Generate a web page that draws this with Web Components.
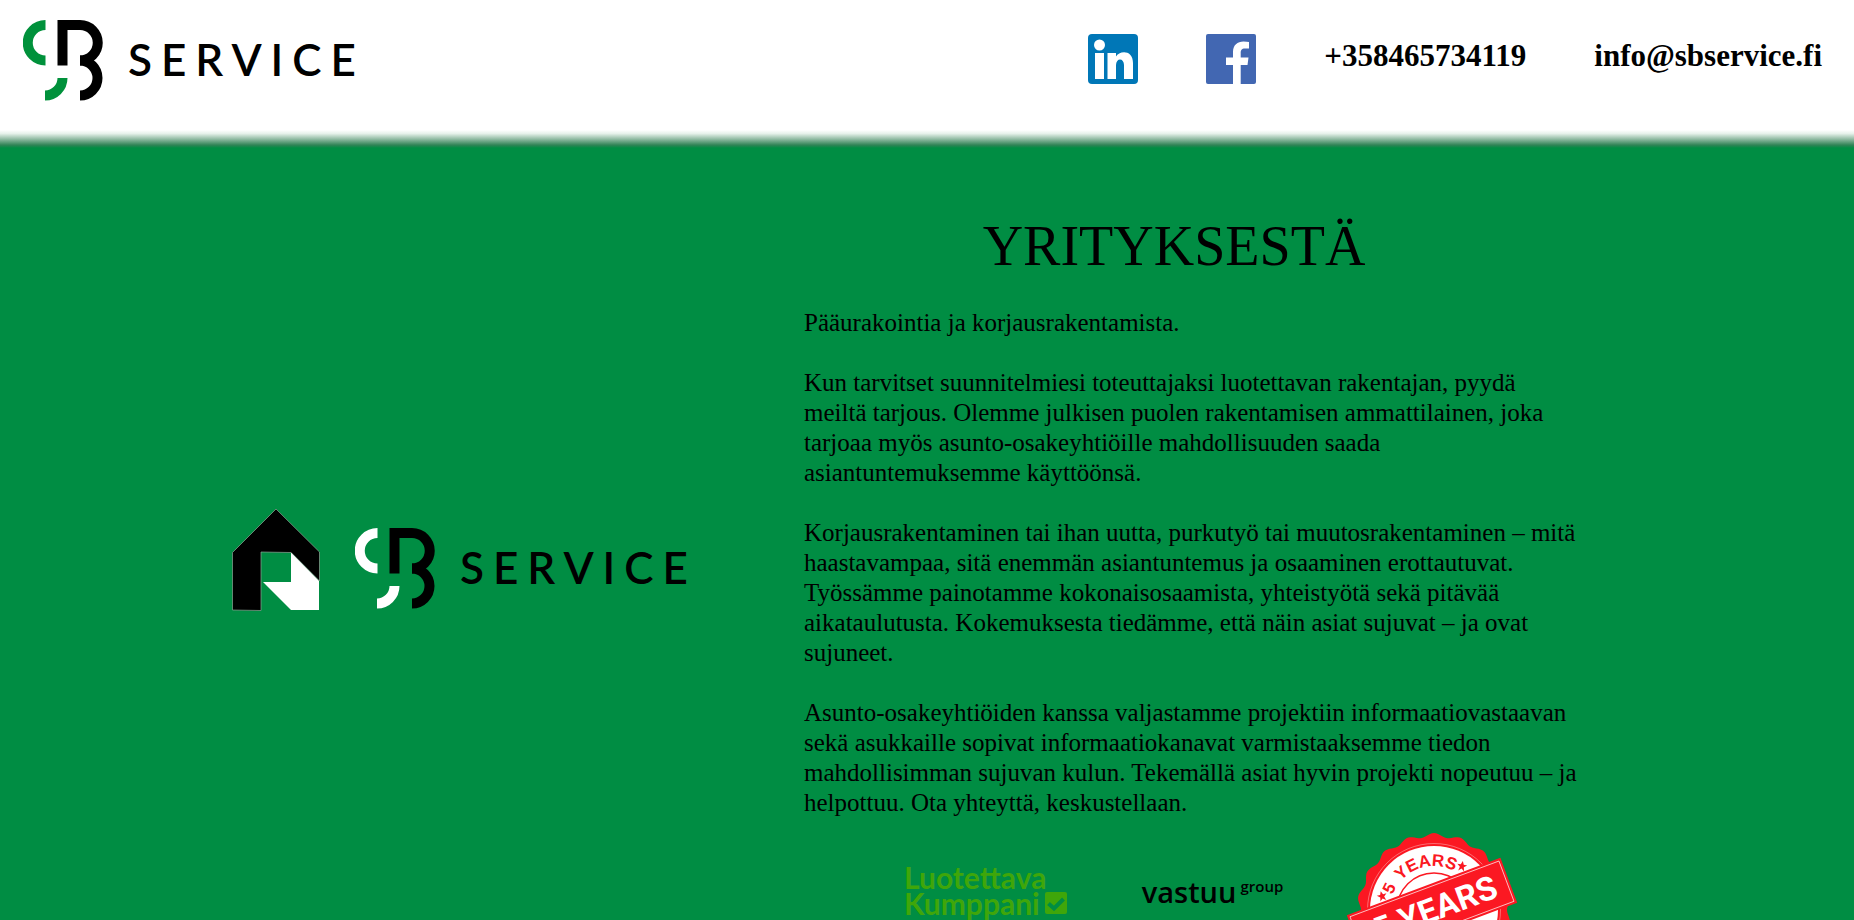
<!DOCTYPE html>
<html lang="fi">
<head>
<meta charset="utf-8">
<title>SB Service</title>
<style>
html { scrollbar-width: none; }
body { margin: 0; background: #008d43; color: #000; font-family: "Liberation Serif", "Times New Roman", serif; }
</style>
</head>
<body>
<sb-page></sb-page>
<script>
const define = (name, html) => {
  const t = document.createElement('template');
  t.innerHTML = html;
  customElements.define(name, class extends HTMLElement {
    constructor() {
      super();
      this.attachShadow({ mode: 'open' }).append(t.content.cloneNode(true));
    }
  });
};

define('sb-logo', `
<style>
  :host { display: flex; align-items: flex-start; gap: 25px; color: #000; }
  svg { display: block; flex: none; }
  .word { font: 600 44px/52px Lato, sans-serif; letter-spacing: 9px; margin-top: 13px; }
</style>
<svg width="80" height="81" viewBox="0 0 80 81" fill="none" stroke-width="10" role="img" aria-label="SB">
  <g style="stroke: var(--accent, #00913b)">
    <path d="M22.500 5H22.500A17.500 17.500 0 0 0 22.500 40.500"/>
    <path d="M22 75.500A17.500 17.500 0 0 0 39.500 58"/>
  </g>
  <g stroke="#000">
    <path d="M39.500 45.500V5H57A17.500 17.500 0 0 1 57 40.500"/>
    <path d="M57 40.500A17.500 17.500 0 0 1 57 75.500"/>
  </g>
</svg>
<span class="word">SERVICE</span>`);

define('sb-house', `
<style>:host { display: block; } svg { display: block; }</style>
<svg width="88" height="103" viewBox="0 0 88 103" role="img" aria-label="Talo">
  <path d="M44 1L87.500 44V73L59 44.500L29 44V102.500L.5 102V44.500Z" stroke="#8fa396" stroke-width=".7"/>
  <path d="M59 44.500L87 73V102H59L31 74H59Z" fill="#fff"/>
</svg>`);

define('sb-header', `
<style>
  :host { display: block; }
  header { display: flex; justify-content: space-between; align-items: flex-start; min-height: 148px; box-sizing: border-box; padding: 20px 32px 0 23px;
    background: linear-gradient(#fff, #fff) top / 100% calc(100% - 18px) no-repeat,
      linear-gradient(#fff, #e6f1ea 20%, #8cb89f 52%, #2f8355 84%, #008d43) bottom / 100% 18px no-repeat; }
  nav { display: flex; align-items: center; gap: 68px; padding-top: 14px; }
  a { color: inherit; text-decoration: none; font-weight: 700; font-size: 31px; line-height: 36px; }
  a svg { display: block; }
  .text { align-self: flex-start; margin-top: 4px; }
</style>
<header>
  <sb-logo></sb-logo>
  <nav>
    <a href="#linkedin" aria-label="LinkedIn"><svg width="50" height="50" viewBox="0 0 50 50">
      <rect width="50" height="50" rx="4" fill="#0077b7"/>
      <g fill="#fff"><circle cx="11.500" cy="11" r="5.500"/><path d="M7 19h9v26H7zM19.500 19H28v3.500C31 16.500 45 15 45 29V45H36V31C36 23.500 28 23.500 28 31V45H19.500z"/></g>
    </svg></a>
    <a href="#facebook" aria-label="Facebook"><svg width="50" height="50" viewBox="0 0 50 50">
      <rect width="50" height="50" rx="2" fill="#4267b2"/>
      <path fill="#fff" d="M27 50V31H20V23.500H27V18C27 11 31.500 7.500 37.500 7.500Q41 7.500 43 8V14.500H39C35.500 14.500 34.700 16.500 34.700 19V23.500H42.500L41.500 31H34.700V50z"/>
    </svg></a>
    <a class="text" href="tel:+358465734119">+358465734119</a>
    <a class="text" href="mailto:info@sbservice.fi">info@sbservice.fi</a>
  </nav>
</header>`);

define('sb-brand', `
<style>
  :host { display: flex; align-items: flex-end; gap: 35px; --accent: #fff; }
  sb-logo { height: 83px; }
</style>
<sb-house></sb-house><sb-logo></sb-logo>`);

define('sb-partner', `
<style>
  :host { display: block; color: #3fa60a; font: 700 30px/26px Lato, sans-serif; }
  div { display: flex; align-items: center; gap: 5px; }
  svg { display: block; }
</style>
<div>Luotettava</div>
<div>Kumppani<svg width="22" height="22" viewBox="0 0 22 22" role="img" aria-label="Tarkistettu"><rect width="22" height="22" rx="2" fill="currentColor"/><path d="M3.500 11.500L9 16.500L18.500 7" fill="none" stroke="#008d43" stroke-width="4"/></svg></div>`);

define('sb-vastuu', `
<style>
  :host { display: flex; align-items: flex-start; gap: 4px; font: 600 29px/36px "Open Sans", sans-serif; }
  small { font-size: 15px; line-height: 24px; }
</style>
<span>vastuu</span><small>group</small>`);

define('sb-stamp', `
<style>
  :host { display: block; }
  svg { display: block; overflow: visible; }
  text { font-family: "Liberation Sans", sans-serif; font-weight: 700; }
  .banner { font-family: Roboto, sans-serif; }
</style>
<svg width="172" height="172" viewBox="0 0 172 172">
  <path id="edge" fill="#fb1822"/>
  <circle cx="86" cy="86" r="66.500" fill="none" stroke="#fff" stroke-width=".6" opacity=".6"/>
  <circle cx="86" cy="86" r="64" fill="#fff"/>
  <circle cx="86" cy="86" r="37" fill="none" stroke="#fb1822" stroke-width="1.500"/>
  <defs><path id="arc" d="M42 86A44 44 0 0 1 130 86"/></defs>
  <g fill="#fb1822" font-size="17" text-anchor="middle">
    <text><textPath href="#arc" startOffset="20">5</textPath></text>
    <text><textPath href="#arc" startOffset="61">YEARS</textPath></text>
    <path transform="translate(34 72) rotate(-15)" d="M0-5L1.500-1.500L5-1.500L2 1L3 5L0 2.500L-3 5L-2 1L-5-1.500L-1.500-1.500Z"/>
    <path transform="translate(114 42) rotate(10)" d="M0-5L1.500-1.500L5-1.500L2 1L3 5L0 2.500L-3 5L-2 1L-5-1.500L-1.500-1.500Z"/>
  </g>
  <g transform="translate(84 85) rotate(-20.500)">
    <rect x="-82" y="-24" width="164" height="48" fill="#fb1822"/>
    <rect x="-79.500" y="-21.500" width="159" height="43" fill="none" stroke="#fff" stroke-width=".8" opacity=".8"/>
    <text class="banner" x="68" y="12" font-size="33" text-anchor="end" fill="#fff">5 YEARS</text>
  </g>
</svg>`);

define('sb-about', `
<style>
  :host { display: block; }
  h1 { margin: 0; padding-right: 40px; text-align: center; font-weight: 400; font-size: 56px; line-height: 64px; }
  p { margin: 0 0 30px; font-size: 25px; line-height: 30px; }
  h1 + p { margin-top: 30px; }
  .logos { display: flex; align-items: flex-start; padding-left: 100px; margin-top: -24px; }
  sb-partner { margin: 40px 75px 0 0; }
  sb-vastuu { margin: 50px 65px 0 0; }
</style>
<h1>YRITYKSESTÄ</h1>
<p>Pääurakointia ja korjausrakentamista.</p>
<p>Kun tarvitset suunnitelmiesi toteuttajaksi luotettavan rakentajan, pyydä meiltä tarjous. Olemme julkisen puolen rakentamisen ammattilainen, joka tarjoaa myös asunto-osakeyhtiöille mahdollisuuden saada asiantuntemuksemme käyttöönsä.</p>
<p>Korjausrakentaminen tai ihan uutta, purkutyö tai muutosrakentaminen – mitä haastavampaa, sitä enemmän asiantuntemus ja osaaminen erottautuvat. Työssämme painotamme kokonaisosaamista, yhteistyötä sekä pitävää aikataulutusta. Kokemuksesta tiedämme, että näin asiat sujuvat – ja ovat sujuneet.</p>
<p>Asunto-osakeyhtiöiden kanssa valjastamme projektiin informaatiovastaavan sekä asukkaille sopivat informaatiokanavat varmistaaksemme tiedon mahdollisimman sujuvan kulun. Tekemällä asiat hyvin projekti nopeutuu – ja helpottuu. Ota yhteyttä, keskustellaan.</p>
<div class="logos"><sb-partner></sb-partner><sb-vastuu></sb-vastuu><sb-stamp></sb-stamp></div>`);

define('sb-page', `
<style>
  :host { display: block; }
  main { display: grid; grid-template-columns: minmax(0, 804fr) minmax(0, 780fr) minmax(0, 270fr); align-items: start; padding: 66px 0 40px; }
  sb-brand { margin: 294px 0 0 232px; }
</style>
<sb-header></sb-header>
<main><sb-brand></sb-brand><sb-about></sb-about></main>`);

/* Scalloped outer edge of the warranty stamp */
const about = document.querySelector('sb-page').shadowRoot.querySelector('sb-about');
const edge = about.shadowRoot.querySelector('sb-stamp').shadowRoot.querySelector('#edge');
let d = '';
for (let i = 0; i < 240; i++) {
  const a = i / 240 * Math.PI * 2, r = 75 + 2 * Math.cos(a * 18);
  d += (i ? 'L' : 'M') + (86 + r * Math.sin(a)) + ' ' + (86 - r * Math.cos(a));
}
edge.setAttribute('d', d + 'Z');
</script>
</body>
</html>
